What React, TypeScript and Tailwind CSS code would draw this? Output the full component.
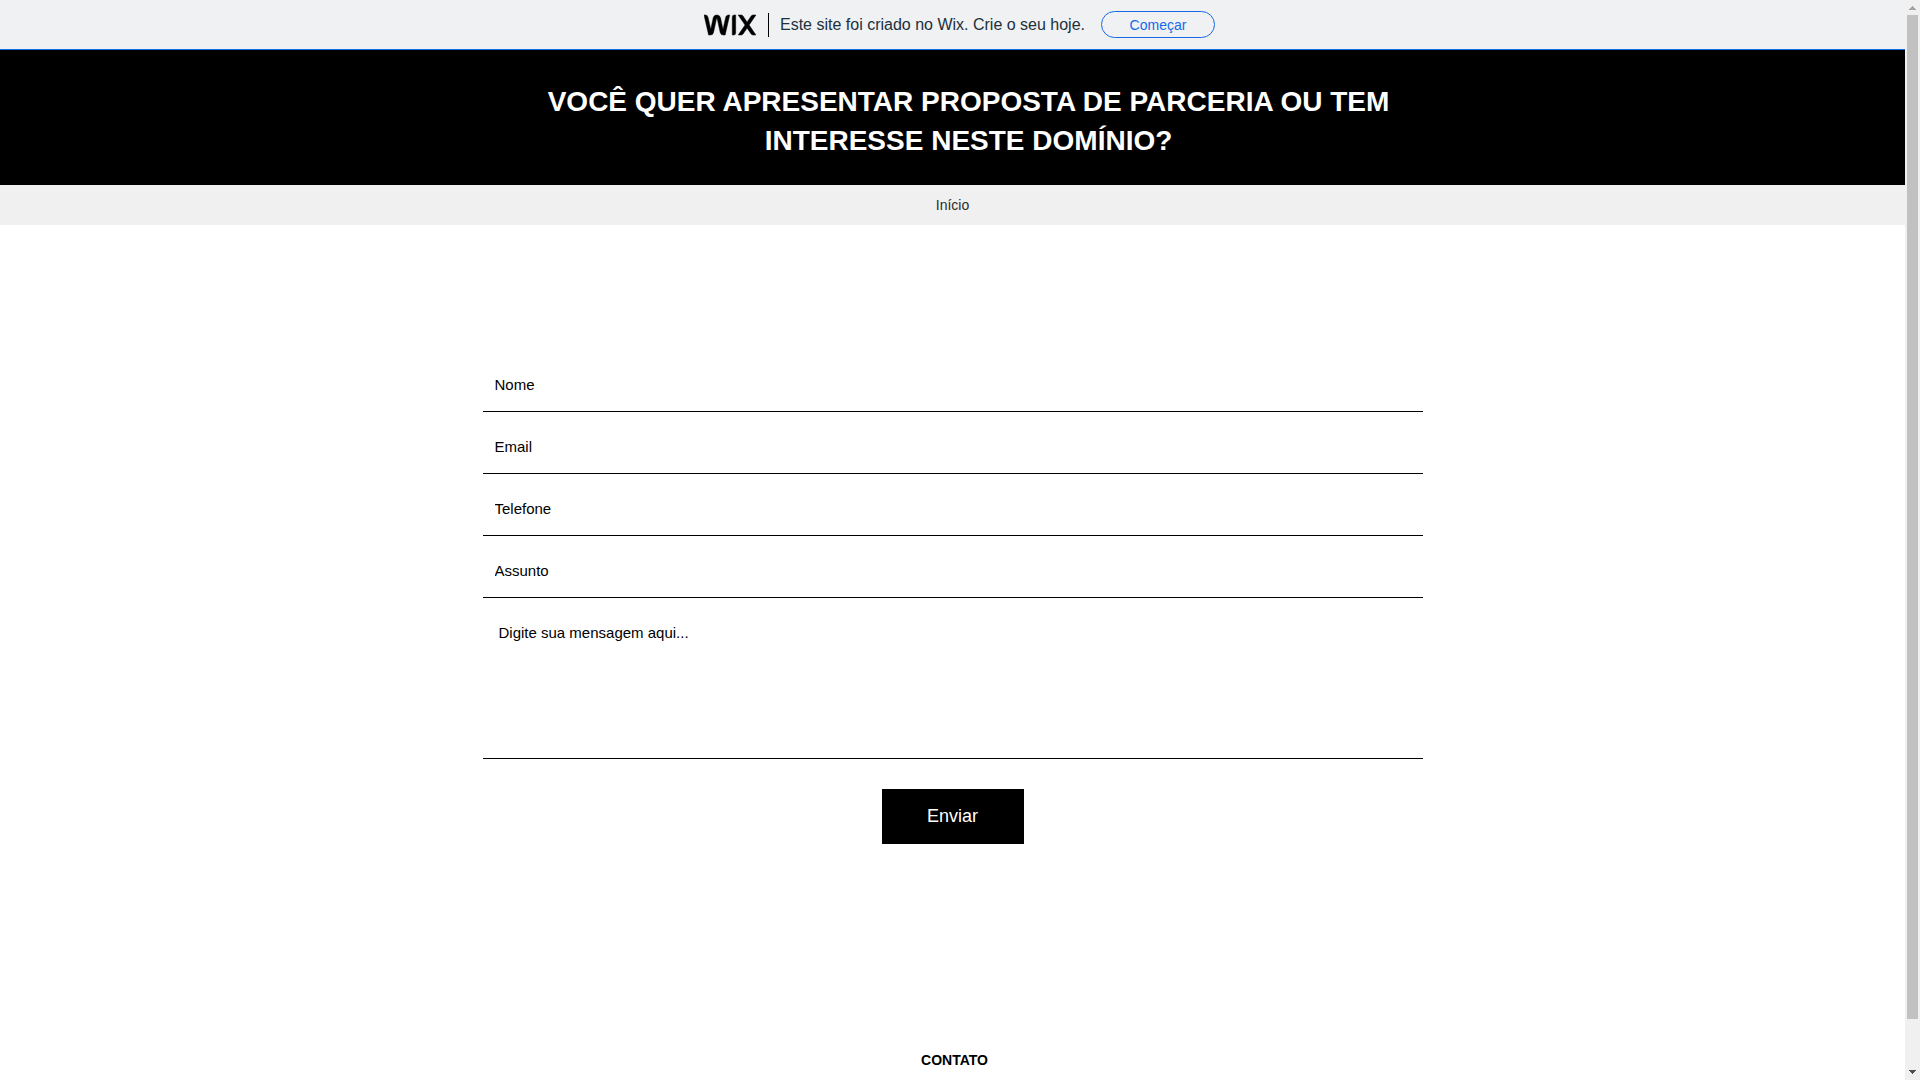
import type { InputHTMLAttributes } from "react";
import { SiWix } from "react-icons/si";

interface FieldProps extends InputHTMLAttributes<HTMLInputElement> {
  id: string;
  label: string;
}

const fields: FieldProps[] = [
  { id: "nome", label: "Nome", type: "text" },
  { id: "email", label: "Email", type: "email" },
  { id: "telefone", label: "Telefone", type: "tel" },
  { id: "assunto", label: "Assunto", type: "text" },
];

const Field = ({ id, label, ...props }: FieldProps) => (
  <input
    id={id}
    name={id}
    aria-label={label}
    placeholder={label}
    className="h-[54px] w-full border-b border-black px-3 text-[15px] text-black outline-none placeholder:text-black"
    {...props}
  />
);

const WixBanner = () => (
  <div className="flex h-[50px] items-center justify-center border-b border-[#166aea] bg-[#eff1f2] pl-[14px]">
    <a href="#wix" aria-label="Wix" className="text-black">
      <SiWix
        viewBox="0 7 24 10"
        stroke="currentColor"
        strokeWidth="0.2"
        className="h-[22px] w-[52px]"
      />
    </a>
    <span className="ml-3 h-6 w-px bg-black" />
    <span className="ml-[11px] text-base text-[#20303c]">
      Este site foi criado no Wix. Crie o seu hoje.
    </span>
    <button
      type="button"
      className="ml-4 h-[27px] w-[114px] rounded-full border border-[#166aea] text-sm text-[#166aea]"
    >
      Começar
    </button>
  </div>
);

const ContactForm = () => (
  <form
    className="flex flex-col gap-2"
    onSubmit={(e) => e.preventDefault()}
  >
    {fields.map((field) => (
      <Field key={field.id} {...field} />
    ))}
    <textarea
      id="mensagem"
      name="mensagem"
      aria-label="Mensagem"
      placeholder="Digite sua mensagem aqui..."
      className="h-[153px] w-full resize-none border-b border-black p-4 text-[15px] leading-[22px] text-black outline-none placeholder:text-black"
    />
    <button
      type="submit"
      className="mt-[22px] h-[55px] w-[142px] self-center bg-black pb-0.5 text-lg text-white"
    >
      Enviar
    </button>
  </form>
);

/* Barra de rolagem sempre visível, à direita da página */
const ScrollTrack = () => (
  <div
    aria-hidden="true"
    className="flex w-[15px] shrink-0 flex-col items-center bg-[#f0f0f0]"
  >
    <div className="flex h-[15px] items-center">
      <svg viewBox="0 0 7 4" className="h-1 w-[7px]" shapeRendering="crispEdges">
        <path d="M3 0h1v1h1v1h1v1h1v1H0V3h1V2h1V1h1z" fill="#a3a3a3" />
      </svg>
    </div>
    <div className="w-[11px] grow bg-[#c1c1c1]" />
    <div className="flex h-[61px] items-end pb-[6px]">
      <svg viewBox="0 0 7 4" className="h-1 w-[7px]" shapeRendering="crispEdges">
        <path d="M0 0h7v1H6v1H5v1H4v1H3V3H2V2H1V1H0z" fill="#505050" />
      </svg>
    </div>
  </div>
);

const App = () => {
  return (
    <div className="flex min-h-screen bg-white font-['Liberation_Sans',Arial,sans-serif]">
      <div className="flex min-w-0 grow flex-col">
        <WixBanner />

        <header className="bg-black pt-8 pb-[25px]">
          <div className="mx-auto max-w-[940px] pl-8">
            <h1 className="text-center text-[28px] leading-[39px] font-bold text-white">
              VOCÊ QUER APRESENTAR PROPOSTA DE PARCERIA OU TEM INTERESSE NESTE
              DOMÍNIO?
            </h1>
          </div>
        </header>

        <nav className="flex h-10 items-center justify-center bg-[#f0f0f0]">
          <a href="#inicio" className="text-sm text-[#2b2b2b]">
            Início
          </a>
        </nav>

        <main className="mx-auto w-full max-w-[940px] pt-[133px]">
          <ContactForm />
        </main>

        <footer className="mt-auto pt-10 pb-[10px] pl-1 text-center">
          <h2 className="text-sm font-bold text-black">CONTATO</h2>
        </footer>
      </div>

      <ScrollTrack />
    </div>
  );
};

export default App;
